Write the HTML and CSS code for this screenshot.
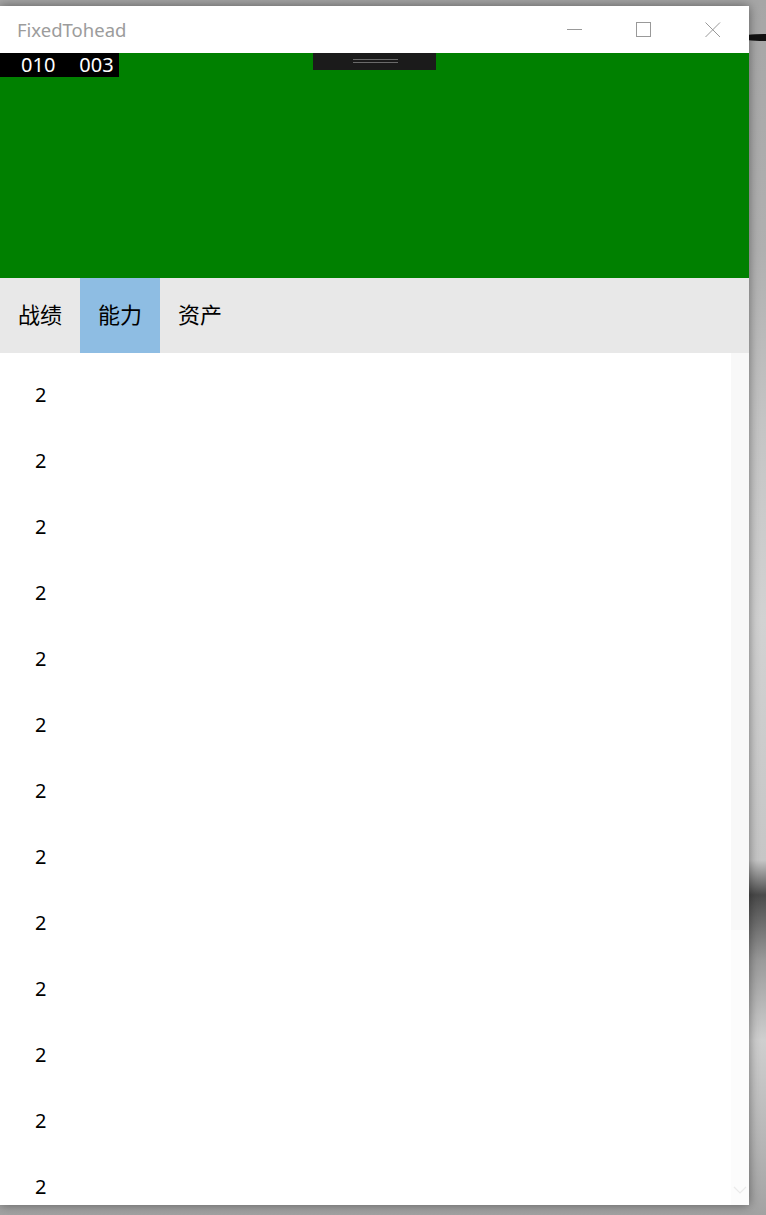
FILE: index.html
```html
<!DOCTYPE html>
<html lang="zh">
<head>
    <meta charset="UTF-8">
    <meta name="viewport" content="width=device-width, initial-scale=1.0">
    <title>FixedTohead</title>
    <link rel="stylesheet" href="styles.css">
</head>
<body>
    <div class="desk-streak"></div>

    <div class="window">
        <div class="titlebar">
            <span class="app-title">FixedTohead</span>
            <div class="caption">
                <span class="cap-btn">
                    <svg width="16" height="16" viewBox="0 0 16 16"><path d="M0 7.5H15" stroke="#999" stroke-width="1"/></svg>
                </span>
                <span class="cap-btn">
                    <svg width="16" height="16" viewBox="0 0 16 16"><rect x="0.5" y="0.5" width="14" height="14" fill="none" stroke="#999" stroke-width="1"/></svg>
                </span>
                <span class="cap-btn">
                    <svg width="16" height="16" viewBox="0 0 16 16"><path d="M0.5 0.5L15 15M15 0.5L0.5 15" stroke="#999" stroke-width="1"/></svg>
                </span>
            </div>
        </div>

        <div class="header">
            <!-- frame rate counter and debug toolbar sit over the content -->
            <div class="fps">
                <span>010</span>
                <span>003</span>
            </div>
            <div class="dev-bar">
                <div class="grip"></div>
            </div>
        </div>

        <div class="tabs">
            <div class="tab">战绩</div>
            <div class="tab active">能力</div>
            <div class="tab">资产</div>
        </div>

        <div class="content">
            <ul class="list">
                <li>2</li>
                <li>2</li>
                <li>2</li>
                <li>2</li>
                <li>2</li>
                <li>2</li>
                <li>2</li>
                <li>2</li>
                <li>2</li>
                <li>2</li>
                <li>2</li>
                <li>2</li>
                <li>2</li>
            </ul>
            <div class="scrollbar">
                <div class="thumb"></div>
                <div class="track">
                    <svg width="14" height="8" viewBox="0 0 14 8"><path d="M1 1L7 7L13 1" fill="none" stroke="#eaeaea" stroke-width="1.2"/></svg>
                </div>
            </div>
        </div>
    </div>
</body>
</html>
```

FILE: styles.css
```css
html, body {
    margin: 0;
    height: 1215px;
    overflow: hidden;
}
body {
    font-family: "Noto Sans", "Noto Sans CJK SC", sans-serif;
    padding-top: 6px;
    box-sizing: border-box;
    position: relative;
    background: linear-gradient(to bottom,
        #a6a6a6 0, #b0b0b0 250px, #c4c4c4 420px, #d2d2d2 620px,
        #c6c6c6 860px, #4a4a4a 895px, #9a9a9a 960px, #cfcfcf 1040px,
        #b4b4b4 1150px, #a2a2a2 1215px);
}
.desk-streak {
    position: absolute;
    left: 740px;
    top: 34px;
    width: 50px;
    height: 7px;
    border-radius: 50%;
    background: #111;
}
.window {
    position: relative;
    width: 749px;
    height: 1199px;
    background: #fff;
    display: flex;
    flex-direction: column;
    box-shadow: 0 0 10px rgba(0, 0, 0, 0.45);
}
.titlebar {
    height: 47px;
    display: flex;
    align-items: center;
    justify-content: space-between;
    flex-shrink: 0;
}
.app-title {
    margin-left: 17px;
    font-size: 18.5px;
    color: #9c9c9c;
}
.caption {
    display: flex;
    margin-right: 28px;
}
.cap-btn {
    width: 69px;
    display: flex;
    justify-content: flex-end;
}
.header {
    position: relative;
    height: 225px;
    background: #008000;
    flex-shrink: 0;
}
.fps {
    position: absolute;
    left: 0;
    top: 0;
    width: 119px;
    height: 24px;
    background: #000;
    color: #fff;
    font-size: 20px;
    line-height: 24px;
    display: flex;
    align-items: center;
    gap: 24px;
    padding-left: 21px;
    box-sizing: border-box;
}
.dev-bar {
    position: absolute;
    left: 313px;
    top: 0;
    width: 123px;
    height: 17px;
    background: #1b1b1b;
}
.grip {
    position: absolute;
    left: 40px;
    top: 6px;
    width: 45px;
    height: 1px;
    background: #6a6a6a;
    box-shadow: 0 3px 0 #6a6a6a;
}
.tabs {
    height: 75px;
    background: #e8e8e8;
    display: flex;
    flex-shrink: 0;
}
.tab {
    padding: 0 18px 6px;
    display: flex;
    align-items: center;
    font-size: 22px;
    color: #000;
}
.tab.active {
    background: #8ebde3;
}
.content {
    flex: 1;
    display: flex;
    overflow: hidden;
}
.list {
    flex: 1;
    margin: 0;
    padding: 9px 0 0 35px;
    list-style: none;
}
.list li {
    height: 66px;
    line-height: 66px;
    font-size: 20px;
    color: #000;
}
.scrollbar {
    width: 18px;
    display: flex;
    flex-direction: column;
}
.thumb {
    height: 577px;
    background: #f8f8f8;
}
.track {
    flex: 1;
    background: #fcfcfc;
    display: flex;
    align-items: flex-end;
    justify-content: center;
    padding-bottom: 11px;
}
```
